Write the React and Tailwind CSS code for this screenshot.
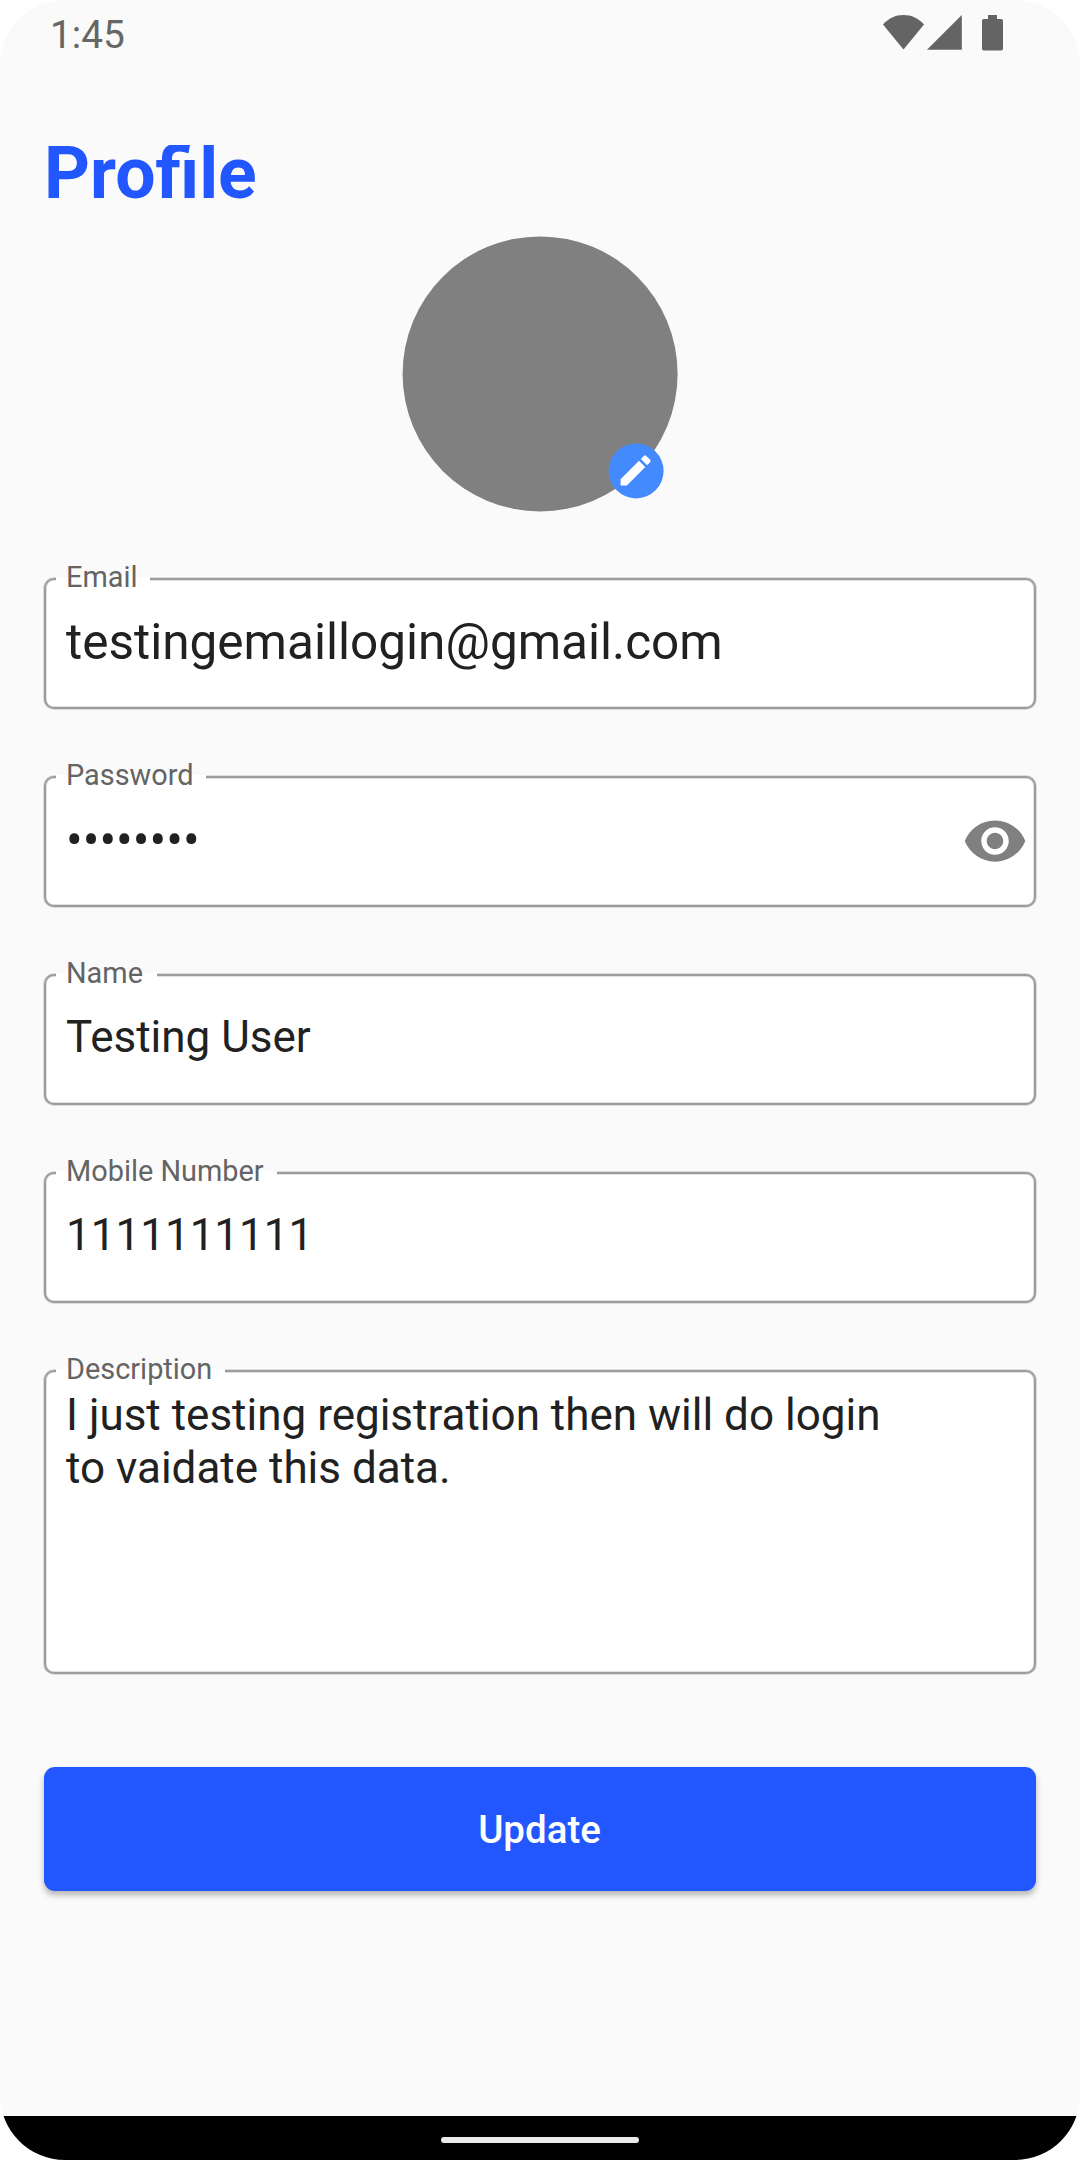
import { MdEdit, MdVisibility } from "react-icons/md";

function StatusBar() {
  return (
    <header className="flex h-[70px] items-start justify-between pl-[50px] pr-[77px]">
      <span className="text-[38.8px] leading-[70px] text-[#666666]">1:45</span>
      <div className="mt-[15px] flex items-start text-[#646464]">
        <svg className="h-[35px] w-[41px]" viewBox="0 0 41 35" fill="currentColor">
          <path d="M20.5 34.5 0 9.5C5.5 3.3 12.5 0 20.5 0S35.5 3.3 41 9.5Z" />
        </svg>
        <svg className="ml-[3px] h-[35px] w-[35px]" viewBox="0 0 35 35" fill="currentColor">
          <path d="M0 34.8 34.8 0V34.8Z" />
        </svg>
        <svg className="ml-5 h-9 w-[21px]" viewBox="0 0 21 36" fill="currentColor">
          <path d="M6 0h9v4h4.2Q21 4 21 5.8v28Q21 35.6 19.2 35.6H1.8Q0 35.6 0 33.8v-28Q0 4 1.8 4H6Z" />
        </svg>
      </div>
    </header>
  );
}

function Field({ label, box, text, notch, icon, children }) {
  return (
    <div
      className={`relative flex items-start justify-between rounded-[10px] border-2 border-[#9c9c9c] bg-white pl-[20px] text-[#212121] shadow-[0_0_0_0.75px_#9c9c9c66,inset_0_0_0_0.75px_#9c9c9c66] ${box}`}
    >
      <span
        className={`absolute -top-[3px] left-[10px] flex h-1 items-center bg-white pl-[10px] text-[28.9px] leading-none whitespace-nowrap text-[#646464] ${notch}`}
      >
        <span className="-translate-y-[2px]">{label}</span>
      </span>
      <p className={text}>{children}</p>
      {icon}
    </div>
  );
}

export default function App() {
  return (
    <div className="flex h-[2160px] w-[1080px] flex-col overflow-hidden rounded-[65px] bg-[#fafafa] font-['Roboto',sans-serif]">
      <StatusBar />
      <main className="flex flex-1 flex-col px-11">
        <h1 className="mt-[63px] h-[84px] text-[71.5px] leading-[82px] font-bold text-[#2256ff] [clip-path:inset(12px_0_0_0)]">
          Profile
        </h1>
        <div className="relative mt-[19px] size-[275px] shrink-0 -translate-x-[0.4px] translate-y-[0.4px] self-center rounded-full bg-[#808080]">
          <div className="absolute right-[14px] bottom-[13.5px] flex size-[55px] items-center justify-center rounded-full bg-[#448aff] text-white">
            <MdEdit className="size-10" />
          </div>
        </div>
        <div className="mt-[67px] flex flex-col gap-[67px]">
          <Field label="Email" box="h-[131px]" notch="w-[94px]" text="text-[49.5px] leading-[124px]">
            testingemaillogin@gmail.com
          </Field>
          <Field
            label="Password"
            box="h-[131px]"
            notch="w-[150px]"
            text="text-[49.5px] leading-[124px]"
            icon={<MdVisibility className="mt-[29.5px] mr-[6px] size-[66px] text-[#808080]" />}
          >
            ••••••••
          </Field>
          <Field label="Name" box="h-[131px]" notch="w-[101px]" text="text-[44px] leading-[122px]">
            Testing User
          </Field>
          <Field label="Mobile Number" box="h-[131px]" notch="w-[221px]" text="text-[44px] leading-[122px]">
            1111111111
          </Field>
          <Field
            label="Description"
            box="h-[304px]"
            notch="w-[169px]"
            text="mt-[17px] text-[44px] leading-[53px]"
          >
            I just testing registration then will do login
            <br />
            to vaidate this data.
          </Field>
        </div>
        <button className="mt-[93px] h-[124px] w-full rounded-[11px] bg-[#2256ff] pt-[2px] pr-[1px] text-[38.5px] font-medium text-white shadow-[0_4px_6px_rgba(0,0,0,0.28)]">
          Update
        </button>
      </main>
      <footer className="flex h-11 items-center justify-center bg-black">
        <div className="mt-[4px] h-[6px] w-[198px] rounded-full bg-[#ebece9]" />
      </footer>
    </div>
  );
}
